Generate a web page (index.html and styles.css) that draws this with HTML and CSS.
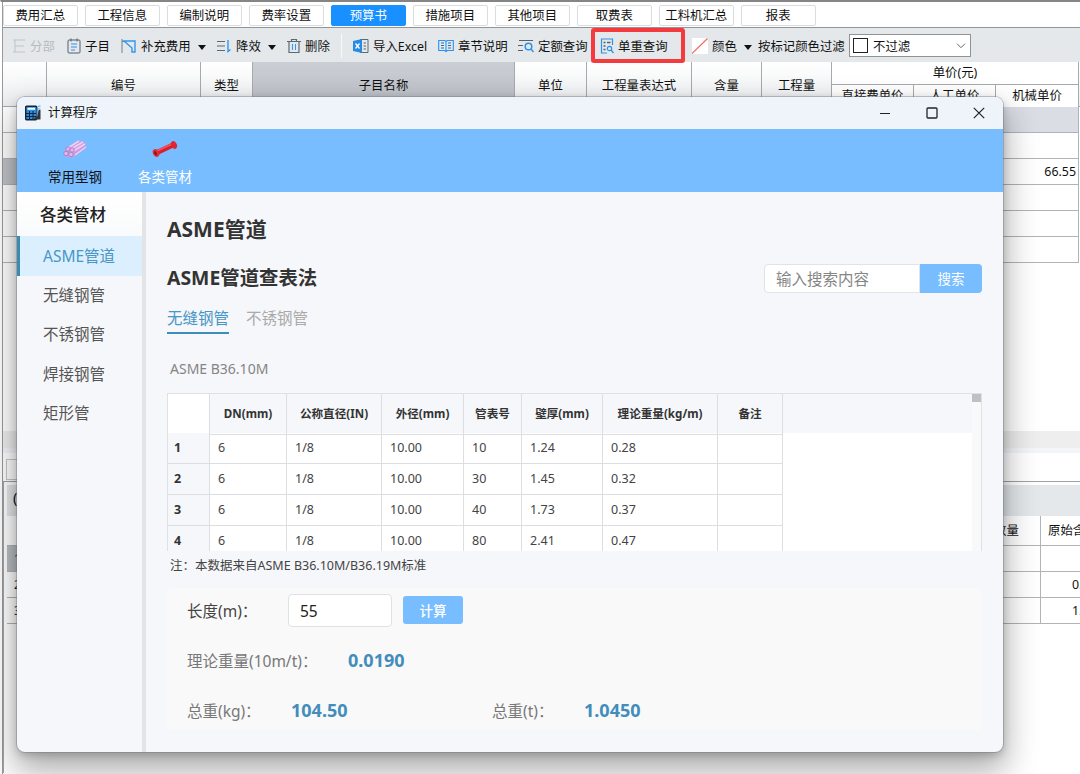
FILE: index.html
```html
<!DOCTYPE html>
<html lang="zh-CN">
<head>
<meta charset="utf-8">
<title>计算程序</title>
<link rel="stylesheet" href="styles.css">
</head>
<body>
<div class="app">
  <nav class="tabs">
    <span class="tab">费用汇总</span><span class="tab">工程信息</span><span class="tab">编制说明</span><span class="tab">费率设置</span><span class="tab tab-on">预算书</span><span class="tab">措施项目</span><span class="tab">其他项目</span><span class="tab">取费表</span><span class="tab">工料机汇总</span><span class="tab">报表</span>
  </nav>
  <div class="toolbar">
    <span class="tool disabled"><svg class="i14" viewBox="0 0 14 16"><path d="M1 2h12M3 2v12M3 8h9M1 14h12" stroke="#bfc4c8" fill="none"/></svg>分部</span>
    <span class="tool"><svg class="i14" viewBox="0 0 14 16"><rect x="1" y="2" width="12" height="13" rx="1" fill="none" stroke="#53616d"/><path d="M4 .5v3M10 .5v3" stroke="#53616d"/><path d="M4 6h6M4 9h6M4 12h4" stroke="#2e91ec" stroke-width="1.2"/></svg>子目</span>
    <span class="tool"><svg class="i16" viewBox="0 0 16 16"><path d="M1 1v14M1 3.500h4" stroke="#70808d" fill="none"/><path d="M3 3h11v11h-3V10L3 3z" fill="none" stroke="#3298ef" stroke-width="1.4"/></svg>补充费用<i class="caret"></i></span>
    <span class="tool"><svg class="i16" viewBox="0 0 16 16"><path d="M1 3.500h8M1 8h8M1 12.500h8" stroke="#5b6974" stroke-width="1.2"/><path d="M12 2v11.500l2.500-2M12 13.500" fill="none" stroke="#3298ef" stroke-width="1.4"/></svg>降效<i class="caret"></i></span>
    <span class="tool tool-last"><svg class="i14" viewBox="0 0 14 16"><path d="M0 3.500h14M4.500 3.500v-2h5v2M2 3.500v11h10v-11" fill="none" stroke="#5b6974" stroke-width="1.2"/><path d="M5.500 6v6M8.500 6v6" stroke="#3298ef"/></svg>删除</span>
    <span class="tool"><svg class="i16" viewBox="0 0 16 16"><path d="M7 1.500h8v13H7M10.500 5H13M10.500 8H13M10.500 11H13" fill="none" stroke="#5b6974"/><path d="M0 3l9-2v14l-9-2z" fill="#278be5"/><path d="M2.500 5.500l4 5M6.500 5.500l-4 5" stroke="#fff" stroke-width="1.3"/></svg>导入Excel</span>
    <span class="tool"><svg class="i16" viewBox="0 0 16 16"><path d="M.7 2.500h6L8 3.500l1.300-1h6v10h-6L8 13.500l-1.300-1h-6zM8 3.500v10" fill="#d9ecfc" stroke="#2e91ec" stroke-width="1.1"/><path d="M3 5h3M3 7.500h3M3 10h3M10 5h3M10 7.500h3M10 10h3" stroke="#53616d"/></svg>章节说明</span>
    <span class="tool"><svg class="i16" viewBox="0 0 16 16"><path d="M1 2.500h14M0 7.500h5M0 12.500h5" stroke="#53616d" stroke-width="1.2"/><circle cx="10.500" cy="8.500" r="3.300" fill="none" stroke="#2e91ec" stroke-width="1.5"/><path d="M13 11l2.500 3" stroke="#2e91ec" stroke-width="1.5"/></svg>定额查询</span>
    <span class="tool marked"><svg class="i14" viewBox="0 0 14 16"><path d="M12.500 7V1h-11v14H7" fill="none" stroke="#2e91ec" stroke-width="1.2"/><path d="M3.500 4.500h2M7 4.500h3.500M3.500 8h2M3.500 11.500h2" stroke="#53616d" stroke-width="1.6"/><circle cx="9.500" cy="10.500" r="2.200" fill="none" stroke="#2e91ec" stroke-width="1.2"/><path d="M11 12l2.500 3" stroke="#2e91ec" stroke-width="1.3"/></svg>单重查询</span>
    <span class="tool"><svg class="i16" viewBox="0 0 16 16"><path d="M0 0h16v16H0z" fill="#fff"/><path d="M0 15.500L15.500.5" stroke="#f26a5c" stroke-width="1.2"/></svg>颜色<i class="caret"></i></span>
    <span class="tool">按标记颜色过滤</span>
    <span class="select"><i class="box"></i>不过滤<svg class="chev" viewBox="0 0 10 6"><path d="M1 .7l4 4 4-4" fill="none" stroke="#666"/></svg></span>
  </div>

  <div class="sheet-head">
    <span></span><span>编号</span><span>类型</span><span class="picked">子目名称</span><span>单位</span><span>工程量表达式</span><span>含量</span><span>工程量</span>
    <div class="group"><b>单价(元)</b><span>直接费单价</span><span>人工单价</span><span>机械单价</span></div>
  </div>
  <div class="sheet-rows">
    <div class="srow first"><i></i><i></i></div>
    <div class="srow"><i></i><i></i></div>
    <div class="srow current"><i></i><i>66.55</i></div>
    <div class="srow"><i></i><i></i></div>
    <div class="srow"><i></i><i></i></div>
    <div class="srow"><i></i><i></i></div>
  </div>
  <div class="hscroll"></div>
  <div class="subtabs"><i></i></div>
  <div class="subpanel">
    <div class="subbar">(</div>
    <div class="lrow lhead"><i></i><i>数量</i><i>原始含量</i></div>
    <div class="lrow lcur"><i>1</i><i></i><i></i></div>
    <div class="lrow"><i>2</i><i></i><i>0.00</i></div>
    <div class="lrow"><i>3</i><i></i><i>1.00</i></div>
  </div>
</div>

<section class="window">
  <header class="titlebar">
    <svg class="app-icon" viewBox="0 0 17 16"><rect x=".7" y="1.200" width="11" height="13.500" rx="1" fill="#278de5" stroke="#182431" stroke-width="1.400"/><path d="M2.500 3.700h7.500" stroke="#fff" stroke-width="2"/><path d="M4.500 6v8M8 6v8M1 8.500h10M1 11.500h10" stroke="#182431"/><path d="M12 14V4.500c0-3 1-3.500 3.500-3.500M12.500 4h3" fill="none" stroke="#3e9ce9"/><path d="M9.500 13l3-2 1-6h2v9.500h-7z" fill="#303438"/></svg>
    <span>计算程序</span>
    <div class="controls">
      <svg viewBox="0 0 12 12"><path d="M1 6.500h10" stroke="#222" stroke-width="1.200"/></svg>
      <svg viewBox="0 0 12 12"><rect x="1" y="1" width="10" height="10" rx="1" fill="none" stroke="#222" stroke-width="1.300"/></svg>
      <svg viewBox="0 0 12 12"><path d="M.8.8l10.400 10.400M11.200.8L.8 11.200" stroke="#222" stroke-width="1.200"/></svg>
    </div>
  </header>
  <nav class="ribbon">
    <div class="cat"><svg viewBox="0 0 26 18"><path d="M2 11L14 2l8-1 2 6-12 10-9 0z" fill="#cf9bdf"/><path d="M5 8.500L17 1M9 9l12-7M8 13l15-9M13 15l11-8" stroke="#efcff5" stroke-width="1.500"/><g fill="#e0b7eb" stroke="#9f78c4" stroke-width=".8"><circle cx="6" cy="9" r="2.200"/><circle cx="4" cy="13.500" r="2.200"/><circle cx="10" cy="10" r="2.200"/><circle cx="9" cy="14.500" r="2.200"/></g></svg>常用型钢</div>
    <div class="cat cat-on"><svg viewBox="0 0 26 18"><path d="M4 13L21 5" stroke="#d8202c" stroke-width="5"/><path d="M5 11L21 3.500" stroke="#f8525b" stroke-width="1.500"/><ellipse cx="22" cy="5" rx="2.800" ry="4" transform="rotate(-25 22 5)" fill="#df2630"/><ellipse cx="4" cy="13" rx="3" ry="4.200" transform="rotate(-25 4 13)" fill="#e12d36"/><ellipse cx="3.500" cy="13.200" rx="1.300" ry="2.200" transform="rotate(-25 3.500 13.200)" fill="#8d1420"/></svg>各类管材</div>
  </nav>
  <div class="body">
    <aside class="side">
      <h3>各类管材</h3>
      <a class="on">ASME管道</a><a>无缝钢管</a><a>不锈钢管</a><a>焊接钢管</a><a>矩形管</a>
    </aside>
    <main class="content">
      <h1>ASME管道</h1>
      <div class="subhead"><h2>ASME管道查表法</h2><div class="search"><span>输入搜索内容</span><button>搜索</button></div></div>
      <div class="ptabs"><span class="on">无缝钢管</span><span>不锈钢管</span></div>
      <p class="std">ASME B36.10M</p>
      <div class="grid-box">
        <div class="gscroll">
          <div class="grow ghead"><b></b><span>DN(mm)</span><span>公称直径(IN)</span><span>外径(mm)</span><span>管表号</span><span>壁厚(mm)</span><span>理论重量(kg/m)</span><span>备注</span></div>
          <div class="grow"><b>1</b><span>6</span><span>1/8</span><span>10.00</span><span>10</span><span>1.24</span><span>0.28</span><span></span></div>
          <div class="grow"><b>2</b><span>6</span><span>1/8</span><span>10.00</span><span>30</span><span>1.45</span><span>0.32</span><span></span></div>
          <div class="grow"><b>3</b><span>6</span><span>1/8</span><span>10.00</span><span>40</span><span>1.73</span><span>0.37</span><span></span></div>
          <div class="grow"><b>4</b><span>6</span><span>1/8</span><span>10.00</span><span>80</span><span>2.41</span><span>0.47</span><span></span></div>
        </div>
        <div class="vbar"><i></i></div>
      </div>
      <p class="note">注：本数据来自ASME B36.10M/B36.19M标准</p>
      <div class="calc">
        <div class="crow c1"><label>长度(m)：</label><span class="input">55</span><button>计算</button></div>
        <div class="crow c2"><label>理论重量(10m/t)：</label><strong>0.0190</strong></div>
        <div class="crow c3"><label>总重(kg)：</label><strong>104.50</strong><label>总重(t)：</label><strong>1.0450</strong></div>
      </div>
    </main>
  </div>
</section>
</body>
</html>
```
FILE: styles.css
```css
* { box-sizing: border-box; }
body { margin: 0; width: 1080px; height: 774px; overflow: hidden; position: relative; background: #fff; color: #111; font-family: "Noto Sans", "Noto Sans CJK SC", sans-serif; font-size: 12.4px; }
i { font-style: normal; }
h1, h2, h3, p { margin: 0; }
button { border: 0; font: inherit; padding: 0; }
svg { flex: none; display: block; }

.app { height: 774px; width: 1080px; padding-left: 2px; border-left: 1px solid #fff; border-top: 2px solid #858585; background: linear-gradient(90deg, #fff 1px, #999 1px, #999 2px, #fff 2px); white-space: nowrap; overflow: hidden; }
.tabs { display: flex; gap: 7.500px; height: 26px; padding: 3px 0 2px; border-bottom: 1px solid #929597; background: #fff; }
.tab { width: 74.500px; border: 1px solid #dadde0; border-radius: 2px; display: flex; align-items: center; justify-content: center; height: 21px; line-height: 20px; }
.tab-on { background: #1890ff; border-color: #1890ff; color: #fff; }
.toolbar { height: 34px; background: #e4e8eb; display: grid; grid-template-columns: 55px 54px 95px 71px 66px 85px 80px 73px 101px 66px 91px 122px; padding-left: 9px; align-items: center; }
.tool { display: flex; align-items: center; height: 24px; }
.tool-last { border-right: 1px solid #f8f9fa; margin-right: 11px; }
.disabled { color: #b6bbbf; }
.i14 { width: 14px; height: 16px; margin-right: 4px; }
.i16 { width: 16px; height: 16px; margin-right: 4px; }
.caret { border: 4px solid transparent; border-top: 5px solid #111; border-bottom: 0; margin-left: 7px; margin-top: 3px; }
.marked { width: 94px; height: 35px; border: 4px solid #f43a3f; border-radius: 3px; padding-left: 5px; }
.select { height: 23px; border: 1px solid #8f9396; background: #fff; display: flex; align-items: center; padding: 0 4px 0 3px; }
.box { width: 15px; height: 15px; border: 1.500px solid #222; margin-right: 5px; }
.chev { width: 10px; height: 6px; margin-left: auto; }

.sheet-head { height: 45px; display: grid; grid-template-columns: 44px 154px 52px 262px 72px 105px 70px 70px 247px; background: linear-gradient(#fff, #eceef0); border-bottom: 1px solid #a6aaae; }
.sheet-head > span { border-right: 1px solid #a6aaae; display: flex; justify-content: center; align-items: center; }
.sheet-head .picked { background: linear-gradient(#cbcfd5, #babec5); }
.group { display: grid; grid-template: 23px 22px / 82px 82px 82px; border-right: 1px solid #a6aaae; background: #fff; }
.group b { grid-column: 1 / 4; font-weight: 400; border-bottom: 1px solid #a6aaae; text-align: center; line-height: 22px; }
.group span { border-right: 1px solid #a6aaae; text-align: center; line-height: 21px; }
.group span:last-child { border-right: 0; }
.srow { height: 26px; display: flex; }
.srow i { border-bottom: 1px solid #b0b4b9; }
.srow i:first-child { width: 44px; }
.srow i:last-child { flex: 1; margin-right: 1px; border-right: 1px solid #b0b4b9; text-align: right; line-height: 25px; padding-right: 2px; }
.srow.first i:last-child { background: #dadde4; }
.srow.current i:first-child { background: #bfc3c8; }
.hscroll { margin-top: 168px; height: 22px; background: linear-gradient(#eee 75%, #f3f5f9 75%); }
.subtabs { height: 28px; padding: 6px 3px 0; }
.subtabs i { display: block; width: 60px; height: 21px; border: 1px solid #c5c9cd; }
.subpanel { border-top: 1px solid #9ea2a5; border-left: 1px solid #a0a4a8; padding: 3px 0 0 3px; height: 292px; }
.subbar { height: 31px; background: #e4e8eb; padding-left: 6px; font-size: 15px; line-height: 25px; }
.lrow { display: grid; grid-template-columns: 950px 84px 84px; height: 26px; }
.lrow i { border-right: 1px solid #b0b4b9; border-bottom: 1px solid #b0b4b9; line-height: 25px; padding-left: 7px; }
.lrow i:last-child { padding-left: 31px; }
.lhead { height: 30px; }
.lhead i { line-height: 29px; padding-left: 37px; }
.lhead i:last-child { padding-left: 7px; }
.lcur i:first-child { background: #b9bec4; }

.window { position: absolute; left: 17px; top: 97px; width: 986px; height: 655px; border-radius: 8px; overflow: hidden; background: #f5f7fa; box-shadow: 0 0 0 1px rgba(110,120,130,.4), 0 3px 8px rgba(0,0,0,.2), 0 16px 32px 3px rgba(0,0,0,.32); }
.titlebar { height: 32px; background: #eef4f9; display: flex; align-items: center; padding: 0 18px 0 8px; gap: 6px; }
.titlebar span { position: relative; top: -1px; }
.app-icon { width: 17px; height: 16px; }
.controls { margin-left: auto; display: flex; gap: 35px; }
.controls svg { width: 12px; height: 12px; }
.ribbon { height: 63px; background: #78bdff; display: flex; padding: 11px 0 0 13px; }
.cat { width: 90px; display: flex; flex-direction: column; align-items: center; font-size: 13.500px; line-height: 18px; gap: 10px; }
.cat svg { width: 26px; height: 18px; }
.cat-on { color: #fff; }
.body { display: flex; height: 560px; }
.side { width: 129px; border-right: 4px solid #e2e4e6; }
.side h3 { height: 44px; line-height: 45px; padding-left: 23px; font-size: 16.500px; font-weight: 500; background: linear-gradient(#fff, #f9fafb); color: #222; }
.side a { display: block; height: 39.300px; line-height: 39px; padding-left: 26px; font-size: 15.500px; color: #555; }
.side a.on { border-left: 3px solid #3a8bb0; background: #dcefff; color: #4796c6; padding-left: 23px; height: 40px; line-height: 41px; }
.content { flex: 1; padding: 20px 21px 0; color: #333; }
.content h1 { font-size: 21px; line-height: 34px; height: 34px; font-weight: 700; }
.subhead { display: flex; justify-content: space-between; align-items: center; margin-top: 17px; height: 30px; }
.subhead h2 { font-size: 19.400px; line-height: 30px; font-weight: 700; }
.search { display: flex; width: 218px; height: 29px; }
.search span { flex: 1; background: #fff; border: 1px solid #e0e3e7; border-radius: 4px 0 0 4px; padding-left: 11px; font-size: 15.500px; line-height: 29px; color: #858585; }
.search button { width: 62px; background: #78bdff; color: #fff; border-radius: 0 4px 4px 0; font-size: 13.500px; }
.ptabs { display: flex; gap: 17px; margin-top: 12px; height: 29px; }
.ptabs span { font-size: 15.500px; line-height: 26px; color: #aaa; height: 29px; }
.ptabs .on { color: #4796c6; border-bottom: 2px solid #3e8ebd; }
.std { margin: 24px 0 0 3px; height: 22px; line-height: 22px; font-size: 14px; color: #858585; }
.grid-box { margin-top: 13px; width: 815px; height: 158px; display: flex; overflow: hidden; border: 1px solid #dfe1e4; border-bottom: 0; background: #fff; }
.gscroll { flex: 1; }
.grow { display: grid; grid-template-columns: 42px 77px 95px 82px 58px 81px 115px 65px; height: 31.100px; font-size: 12.500px; line-height: 30px; color: #444; }
.grow > * { border-right: 1px solid #dcdee1; border-bottom: 1px solid #dcdee1; padding-left: 8px; }
.grow b { background: #f5f7fa; color: #333; padding-left: 6px; }
.ghead { height: 39px; background: #f5f7fa; line-height: 40px; font-weight: 700; font-size: 11.600px; color: #333; text-align: center; }
.ghead > * { padding: 0; }
.ghead b { background: #fff; }
.vbar { width: 9px; background: #f8f9fa; }
.vbar i { display: block; height: 8px; background: #bfc0c1; }
.note { margin-left: 3px; height: 37px; line-height: 29px; font-size: 12.500px; color: #444; }
.calc { width: 815px; height: 142px; background: #f9f9f9; border-radius: 4px; padding: 5px 0 0 20px; font-size: 15.500px; }
.crow { display: flex; align-items: center; }
.crow label { color: #777; }
.crow strong { color: #428dbb; font-size: 18px; font-weight: 700; }
.c1 { height: 34px; }
.c1 label { width: 101px; color: #444; }
.input { width: 104px; height: 33px; border: 1px solid #dfe1e4; border-radius: 4px; background: #fff; line-height: 32px; padding-left: 11px; color: #222; }
.c1 button { width: 60px; height: 28px; border-radius: 3px; margin-left: 11px; background: #78bdff; color: #fff; font-size: 13.500px; font-weight: 500; }
.c2 { height: 50px; margin-top: 8px; }
.c2 label { width: 161px; }
.c3 { height: 50px; }
.c3 label { width: 104px; }
.c3 label:nth-of-type(2) { width: 92px; }
.c3 strong { width: 201px; }
```
